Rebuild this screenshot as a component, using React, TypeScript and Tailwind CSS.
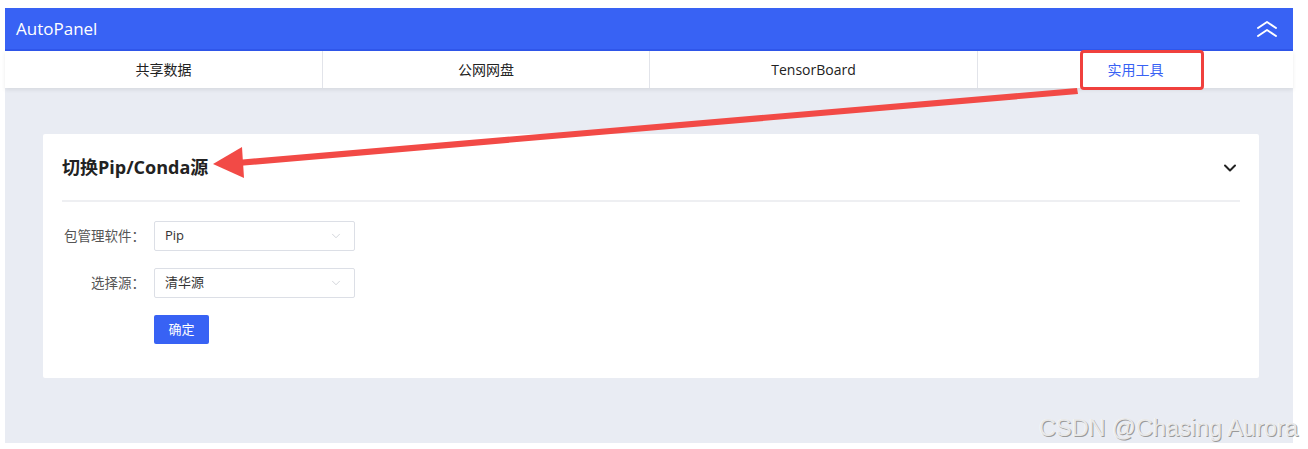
import { ChevronDown } from "lucide-react";

const tabs = [
  { label: "共享数据", w: "w-[318px]" },
  { label: "公网网盘", w: "w-[327px]" },
  { label: "TensorBoard", w: "w-[328px]" },
  { label: "实用工具", w: "flex-1", active: true },
];

function Select({ value }: { value: string }) {
  return (
    <div className="flex h-[30px] w-[201px] items-center justify-between rounded-[2px] border border-[#dcdfe6] bg-white pl-[10px] pr-[11px] text-[13px] text-[#333]">
      <span>{value}</span>
      <ChevronDown className="h-[14px] w-[14px] text-[#c0c4cc]" strokeWidth={1.2} />
    </div>
  );
}

export default function App() {
  return (
    <div
      className="relative h-[449px] w-[1308px] overflow-hidden bg-white pl-[5px] pt-[8px]"
      style={{ fontFamily: '"Open Sans", "Noto Sans CJK SC", sans-serif' }}
    >
      <div className="flex h-[435px] w-[1288px] flex-col bg-[#e9ecf3]">
        {/* header */}
        <div className="flex h-[43px] items-center justify-between border-b-2 border-[#2f56ea] bg-[#3862f4] pl-[11px] pr-[15px]">
          <span className="text-[17px] text-white">AutoPanel</span>
          <svg width="22" height="18" viewBox="0 0 22 18" fill="none" stroke="white" strokeWidth="2" strokeLinecap="round" strokeLinejoin="round">
            <path d="M2 8 L11 2 L20 8" />
            <path d="M2 16 L11 10 L20 16" />
          </svg>
        </div>

        {/* tabs */}
        <div className="flex h-[37px] bg-white shadow-[0_2px_4px_rgba(0,0,0,0.08)]">
          {tabs.map((t, i) => (
            <div
              key={t.label}
              className={`${t.w} flex items-center justify-center text-[14px] ${
                i < tabs.length - 1 ? "border-r border-[#e2e4ea]" : ""
              } ${t.active ? "text-[#3862f4]" : "text-[#222]"}`}
            >
              {t.label}
            </div>
          ))}
        </div>

        {/* content */}
        <div className="px-[38px] pt-[46px]">
          <div className="h-[244px] w-[1216px] rounded-[2px] bg-white px-[19px]">
            <div className="flex h-[68px] items-center justify-between border-b-2 border-[#eeeff2] pt-[1px]">
              <span className="text-[18px] font-bold text-[#222]">切换Pip/Conda源</span>
              <ChevronDown className="h-[20px] w-[20px] text-[#222]" strokeWidth={2.4} />
            </div>

            <div className="flex flex-col gap-[17px] pt-[19px]">
              <div className="flex items-center">
                <span className="w-[92px] pr-[9px] text-right text-[13.5px] text-[#555]">包管理软件：</span>
                <Select value="Pip" />
              </div>
              <div className="flex items-center">
                <span className="w-[92px] pr-[9px] text-right text-[13.5px] text-[#555]">选择源：</span>
                <Select value="清华源" />
              </div>
              <div className="pl-[92px]">
                <button className="h-[29px] w-[55px] rounded-[2px] bg-[#3862f4] text-[13px] text-white">
                  确定
                </button>
              </div>
            </div>
          </div>
        </div>
      </div>

      {/* annotation: red box + arrow */}
      <div className="absolute left-[1080px] top-[50px] h-[40px] w-[124px] rounded-[4px] border-[3px] border-[#f0403d]" />
      <svg className="pointer-events-none absolute left-0 top-0" width="1308" height="449">
        <polygon points="1077,88 1078,94 238,166 237,160" fill="#f24a46" />
        <polygon points="213,164 242,147 244,178" fill="#f24a46" />
      </svg>

      {/* watermark */}
      <div
        className="absolute left-[1039px] top-[411px] text-[23.5px] text-[#e8e8e8]"
        style={{
          fontFamily: '"Liberation Sans", Arial, sans-serif',
          textShadow: "1px 1px 0 #9a9a9a, -0.5px -0.5px 0 #ffffff",
        }}
      >
        CSDN @Chasing Aurora
      </div>
    </div>
  );
}
